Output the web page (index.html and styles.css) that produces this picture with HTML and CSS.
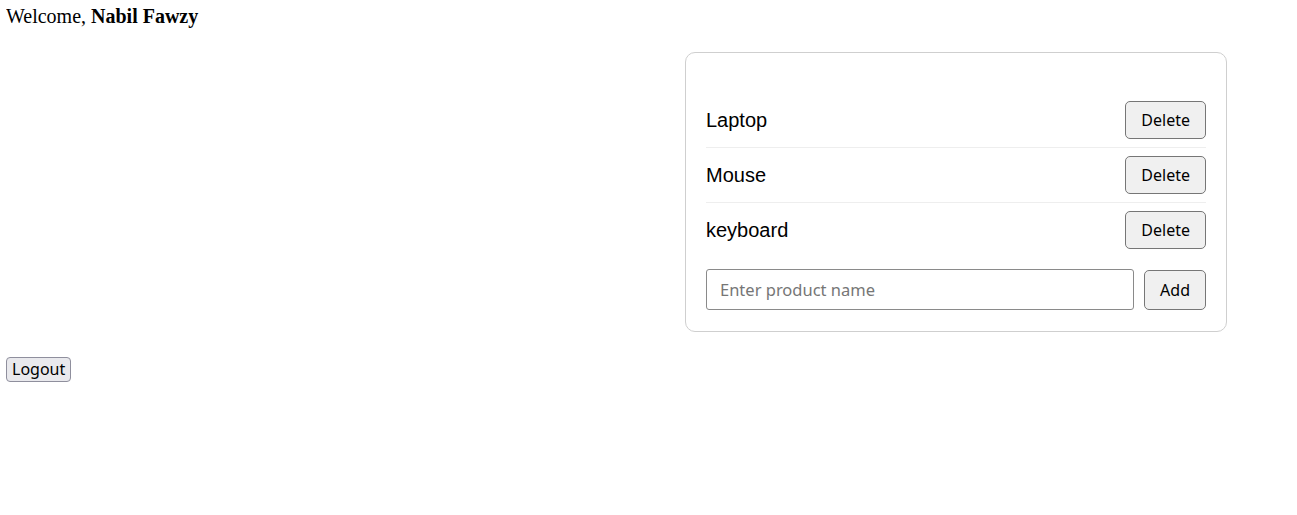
FILE: index.html
```html
<!DOCTYPE html>
<html>
<head>
<meta charset="utf-8">
<title>Products</title>
<link rel="stylesheet" href="styles.css">
</head>
<body>
<div class="welcome">Welcome, <strong>Nabil Fawzy</strong></div>
<div class="card">
  <ul class="list">
    <li class="row"><span class="name">Laptop</span><button class="btn">Delete</button></li>
    <li class="row"><span class="name">Mouse</span><button class="btn">Delete</button></li>
    <li class="row"><span class="name">keyboard</span><button class="btn">Delete</button></li>
  </ul>
  <div class="add-row">
    <input class="input" type="text" placeholder="Enter product name">
    <button class="btn add">Add</button>
  </div>
</div>
<button class="logout">Logout</button>
</body>
</html>
```
FILE: styles.css
```css
body {
  margin: 6px;
  font-family: "Liberation Serif", "Times New Roman", serif;
  font-size: 16px;
  color: #000;
  background: #fff;
}
.welcome {
  font-size: 20px;
  line-height: 20px;
}
.card {
  box-sizing: border-box;
  width: 542px;
  margin: 26px 64px 0 auto;
  padding: 40px 20px 21px;
  border: 1px solid #cfcfcf;
  border-radius: 10px;
}
.list {
  list-style: none;
  margin: 0;
  padding: 0;
}
.row {
  display: flex;
  align-items: center;
  justify-content: space-between;
  padding: 8px 0;
  border-bottom: 1px solid #eeeeee;
}
.row:last-child {
  border-bottom: none;
}
.name {
  font-family: "Liberation Sans", Arial, sans-serif;
  font-size: 20px;
}
.btn {
  box-sizing: border-box;
  height: 38px;
  padding: 0 15px;
  font-family: "Noto Sans", sans-serif;
  font-size: 16px;
  color: #000;
  background: #f0f0f0;
  border: 1px solid #767676;
  border-radius: 5px;
}
.add-row {
  display: flex;
  align-items: center;
  gap: 10px;
  margin-top: 12px;
}
.input {
  box-sizing: border-box;
  flex: 1;
  height: 41px;
  padding: 0 13px;
  font-family: "Noto Sans", sans-serif;
  font-size: 16.5px;
  border: 1px solid #8a8a8a;
  border-radius: 3px;
}
.input::placeholder {
  color: #767676;
}
.add {
  height: 40px;
}
.logout {
  margin-top: 25px;
  padding: 1px 5px;
  font-family: "Noto Sans", sans-serif;
  font-size: 16px;
  line-height: 21px;
  color: #000;
  background: #e9e9ed;
  border: 1px solid #8f8f9d;
  border-radius: 4px;
}
```
